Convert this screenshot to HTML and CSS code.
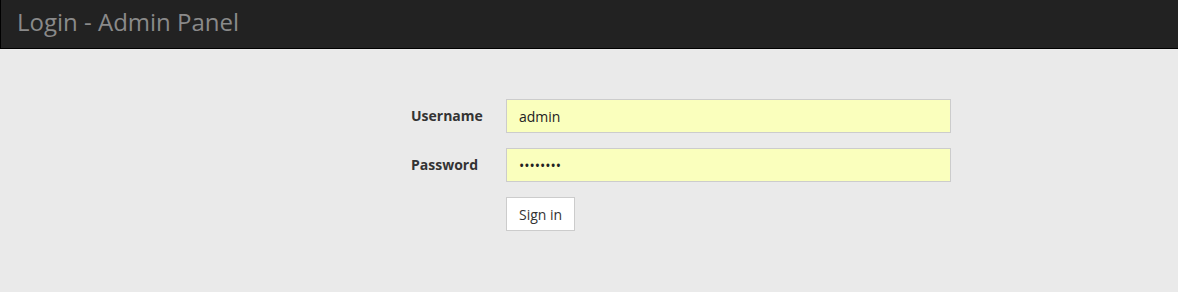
FILE: index.html
```html
<!DOCTYPE html>
<html>
<head>
<meta charset="utf-8">
<link rel="stylesheet" href="styles.css">
</head>
<body>
<header class="topbar"><h1 class="title">Login - Admin Panel</h1></header>
<main class="content">
  <form class="login">
    <div class="row">
      <label class="label">Username</label>
      <input class="field" type="text" value="admin">
    </div>
    <div class="row">
      <label class="label">Password</label>
      <input class="field" type="password" value="password">
    </div>
    <div class="row">
      <span class="label"></span>
      <button class="btn" type="button">Sign in</button>
    </div>
  </form>
</main>
</body>
</html>
```
FILE: styles.css
```css
html, body {
  margin: 0;
  padding: 0;
  background: #eaeaea;
  font-family: "Open Sans", "Noto Sans", sans-serif;
  font-size: 14px;
  color: #333;
}
.topbar {
  height: 48px;
  background: #222;
  border-left: 1px solid #000;
  border-bottom: 1px solid #000;
  padding-left: 16px;
  display: flex;
  align-items: center;
}
.title {
  margin: 0;
  font-weight: 400;
  font-size: 24px;
  color: #8a8a8a;
  line-height: 1;
  position: relative;
  top: -2px;
}
.content {
  padding-top: 50px;
  height: 194px;
}
.login {
  margin-left: 411px;
  display: flex;
  flex-direction: column;
  gap: 15px;
}
.row {
  display: flex;
  align-items: center;
}
.label {
  width: 95px;
  font-weight: 700;
  font-size: 14px;
  color: #333;
  position: relative;
  top: -1px;
}
.field {
  box-sizing: border-box;
  width: 445px;
  height: 34px;
  margin: 0;
  border: 1px solid #ccc;
  background: #faffbd;
  padding: 0 12px;
  font-family: "Open Sans", "Noto Sans", sans-serif;
  font-size: 14px;
  color: #222;
  outline: none;
}
.btn {
  box-sizing: border-box;
  height: 34px;
  padding: 0 12px;
  background: #fff;
  border: 1px solid #ccc;
  font-family: "Open Sans", "Noto Sans", sans-serif;
  font-size: 14px;
  color: #333;
}
```
